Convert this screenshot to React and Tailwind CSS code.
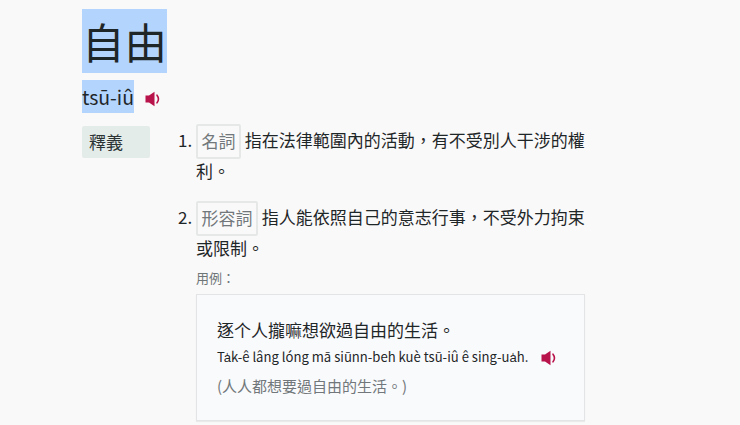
import React from "react";

function Speaker({ className }) {
  return (
    <svg viewBox="0 0 16 16" className={className} aria-hidden="true">
      <path d="M0.5 4.5h3.5L9.5 0.8v14.4L4 11.5H0.5z" fill="#b8134a" />
      <path d="M12 4.2c1.7 2.2 1.7 5.4 0 7.6" fill="none" stroke="#b8134a" strokeWidth="1.6" strokeLinecap="round" />
    </svg>
  );
}

function Tag({ children }) {
  return (
    <span className="inline-block h-[35px] border-2 border-[#e6e8e8] rounded-[2px] px-[3.5px] leading-[29px] text-[#71777a] align-middle -my-[4px] -translate-y-px">
      {children}
    </span>
  );
}

export default function App() {
  return (
    <div className="h-[425px] overflow-hidden bg-[#f9f9f9] pl-[82px] pt-[9px] text-[#1f2628] font-['Noto_Sans_CJK_TC','Noto_Sans_CJK_SC',sans-serif]">
      <h1 className="w-fit bg-[#b3d4fc] text-[42.5px] leading-[64px] font-normal">自由</h1>
      <div className="mt-[7px] flex items-center">
        <span className="bg-[#b3d4fc] text-[19.5px] leading-[33px]">tsū-iû</span>
        <Speaker className="ml-[11px] w-[16px] h-[16px] mt-[4px]" />
      </div>
      <div className="mt-[13px] flex">
        <div className="w-[68px] h-[32px] bg-[#e4ecea] rounded-[2px] pl-[7px] text-[17px] leading-[32px] text-[#2b3335]">釋義</div>
        <ol className="ml-[28px] -mt-[1px] w-[407px] text-[17px] leading-[29px]">
          <li className="flex">
            <span className="w-[18px] shrink-0 text-[17px]">1.</span>
            <div className="w-[389px]">
              <p><Tag>名詞</Tag> 指在法律範圍內的活動，有不受別人干涉的權利。</p>
            </div>
          </li>
          <li className="flex mt-[17px]">
            <span className="w-[18px] shrink-0 text-[17px]">2.</span>
            <div className="w-[389px]">
              <p><Tag>形容詞</Tag> 指人能依照自己的意志行事，不受外力拘束或限制。</p>
              <p className="mt-[4px] text-[13px] leading-[24px] text-[#6f7678]">用例：</p>
              <div className="mt-[4px] h-[127px] bg-[#f9fafc] border border-[#e2e4e6] shadow-[0_1px_1px_rgba(0,0,0,0.06)] pl-[20px] pt-[20px]">
                <p className="text-[17px] leading-[29px]">逐个人攏嘛想欲過自由的生活。</p>
                <div className="flex items-center h-[26px]">
                  <span className="text-[13.1px] leading-[26px] whitespace-nowrap">Ta̍k-ê lâng lóng mā siūnn-beh kuè tsū-iû ê sing-ua̍h.</span>
                  <Speaker className="ml-[13px] w-[16px] h-[16px] mt-[2px]" />
                </div>
                <p className="mt-[2px] text-[15px] leading-[27px] text-[#71777a]">(人人都想要過自由的生活。)</p>
              </div>
            </div>
          </li>
        </ol>
      </div>
    </div>
  );
}
